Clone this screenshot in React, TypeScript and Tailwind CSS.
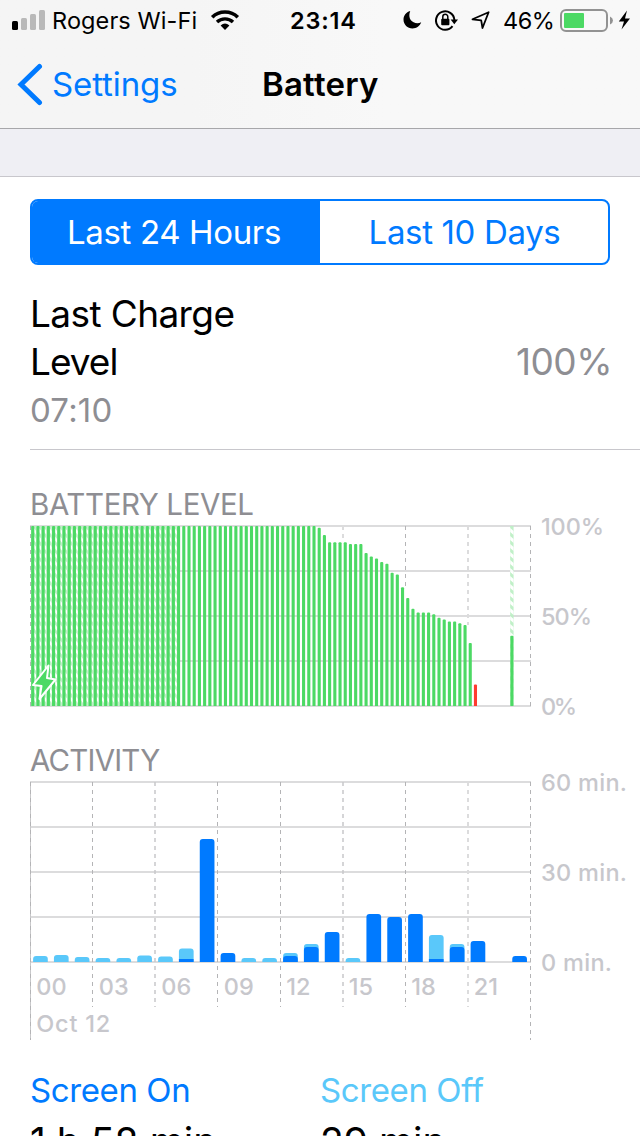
import type { ReactNode } from "react";

const BATTERY_TAIL = [
  99, 95, 91, 91, 91, 91, 90, 90, 90, 85, 83, 82, 80, 79, 74, 73, 66, 60, 54,
  52, 52, 52, 51, 49, 48, 47, 47, 46, 45, 35, 12,
];
const BATTERY: number[] = [...Array(55).fill(100), ...BATTERY_TAIL, 0, 0, 0, 0, 0, 0, 39];
const SLOT = 500 / 96;

// [total, screen on] in chart pixels, three per minute
const ACTIVITY: [number, number][] = [
  [6, 0], [7, 0], [5, 0], [4, 0], [4, 0], [6.5, 0], [5.5, 0], [13.5, 3],
  [123, 123], [9, 9], [4, 0], [4, 0], [9, 6], [18, 15], [30, 30], [4, 0],
  [48, 48], [45, 45], [48, 48], [27, 3], [18, 15], [21, 21], [0, 0], [6, 6],
];
const HOURS = ["00", "03", "06", "09", "12", "15", "18", "21"];

function Label({ x, y, w, children }: { x: number; y: number; w?: number; children: ReactNode }) {
  return (
    <text x={x} y={y} textLength={w} fontSize="23.5" fontWeight="500" fill="#c7c7cc">
      {children}
    </text>
  );
}

function topRounded(x: number, h: number, w: number, r: number, base: number) {
  const q = Math.min(r, h);
  return `M${x} ${base}V${base - h + q}q0 ${-q} ${q} ${-q}h${w - 2 * q}q${q} 0 ${q} ${q}V${base}Z`;
}

function Grid() {
  return (
    <g fill="#dcdcdd">
      {[0, 45, 90, 135, 180].map((y) => (
        <rect key={y} x="30" y={y + 5} width="501" height="2" />
      ))}
    </g>
  );
}

function ChargingStripe({ slot }: { slot: number }) {
  const x = 31 + slot * SLOT;
  const w = slot === 92 ? 3.4 : SLOT;
  const left = slot === 92 ? x : x + 2.8;
  const right = x + w;
  return (
    <g opacity="0.94">
      <rect x={x} y={6} width={w} height={180} fill="#bdf0c5" />
      {[...Array(22)].map((_, k) => {
        const y = 8 + k * 8;
        return (
          <path key={k} d={`M${left} ${y}L${right} ${y + 3}V${y + 7}L${left} ${y + 4}Z`} fill="#fff" />
        );
      })}
    </g>
  );
}

function BatteryChart() {
  return (
    <svg width="640" height="206" className="block shrink-0 overflow-visible">
      <Grid />
      <g stroke="#b4b4b6" strokeDasharray="4 4">
        <path d="M343 6V20" strokeWidth="2" stroke="#dcdcdd" />
        <path d="M405.5 6V67" />
        <path d="M468 6V105" stroke="#dcdcdd" strokeWidth="2" />
        <path d="M530.5 6V186" />
        <path d="M30.5 6V186" />
      </g>
      {BATTERY.map((_, i) => (i < 28 || i === 92 ? <ChargingStripe key={i} slot={i} /> : null))}
      {BATTERY.map((level, i) =>
        level > 0 ? (
          <path
            key={i}
            d={topRounded(31.2 + i * SLOT, level * 1.8, 3.1, 1, 186)}
            fill={level < 20 ? "#ff3b30" : "#4cd964"}
          />
        ) : null,
      )}
      <path
        d="M48.5 145.5L33 165L41.5 166L39.5 179L55.5 159.5L47 158Z"
        fill="#4cd964"
        stroke="#fff"
        strokeWidth="2"
        strokeLinejoin="round"
      />
      <Label x={541} y={15} w={63}>100%</Label>
      <Label x={541} y={105} w={51}>50%</Label>
      <Label x={541} y={195} w={36}>0%</Label>
    </svg>
  );
}

function ActivityChart() {
  return (
    <svg width="640" height="270" className="block shrink-0 overflow-visible">
      <Grid />
      <g stroke="#b4b4b6" strokeDasharray="4 4">
        <path d="M30.5 6V264" stroke="#c8c8ca" strokeDasharray="none" />
        <path d="M30.5 6V264" />
        <path d="M92.5 6V231" />
        <path d="M155 6V231" strokeWidth="1.5" stroke="#c8c8ca" />
        <path d="M217.5 6V231" />
        <path d="M280.5 6V231" />
        <path d="M343 6V231" strokeWidth="1.5" stroke="#c8c8ca" />
        <path d="M405.5 6V231" />
        <path d="M468 6V231" strokeWidth="2" stroke="#dcdcdd" />
        <path d="M530.5 6V264" />
      </g>
      {ACTIVITY.map(([total, on], i) => {
        const x = 33.1 + (i * 500) / 24;
        return (
          <g key={i}>
            {total > on && <path d={topRounded(x, total, 14.7, 3, 186)} fill="#5ac8fa" />}
            {on > 0 && <path d={topRounded(x, on, 14.7, on > 3 ? 3 : 0.5, 186)} fill="#007aff" />}
          </g>
        );
      })}
      {HOURS.map((h, i) => (
        <Label key={h} x={36.3 + i * 62.5} y={219}>{h}</Label>
      ))}
      <Label x={36.3} y={256} w={74}>Oct 12</Label>
      <Label x={541} y={15} w={86}>60 min.</Label>
      <Label x={541} y={105} w={86}>30 min.</Label>
      <Label x={541} y={195} w={71}>0 min.</Label>
    </svg>
  );
}

function StatusBar() {
  return (
    <div className="flex h-10 shrink-0 items-center">
      <svg width="34" height="22" className="ml-3 shrink-0">
        <rect x="0" y="12" width="6" height="9" rx="1.5" />
        <g fill="#b9b9b9">
          <rect x="9" y="9" width="6" height="12" rx="1.5" />
          <rect x="18" y="5" width="6" height="16" rx="1.5" />
          <rect x="27" y="1" width="6" height="20" rx="1.5" />
        </g>
      </svg>
      <span className="ml-1.5 w-[158px] pt-[2px] text-[23.5px] tracking-[0.1px]">Rogers Wi-Fi</span>
      <svg width="30" height="22" className="shrink-0" fill="none" stroke="#000">
        <path d="M2.2 8.2C9.2 1.3 20.8 1.3 27.8 8.2" strokeWidth="3.6" />
        <path d="M7 13C11.4 8.8 18.6 8.8 23 13" strokeWidth="3.4" />
        <path d="M10.6 16.4Q15 12.8 19.4 16.4L15 21Z" fill="#000" stroke="none" />
      </svg>
      <span className="ml-[50px] w-[113px] pt-[2px] text-[23.5px] font-semibold tracking-[0.8px]">23:14</span>
      <svg width="19" height="20" className="shrink-0">
        <path d="M7.2 1C3 2.3 0.5 5.5 0.5 9.6C0.5 14.8 4.5 18.5 9.5 18.5C13.6 18.5 17 16 18.2 12.3C12 15.2 3.6 10.5 7.2 1Z" />
      </svg>
      <svg width="24" height="22" className="ml-[13px] shrink-0">
        <path d="M17.5 17.2A9.2 9.2 0 1 1 19.4 11" fill="none" stroke="#000" strokeWidth="2" />
        <path d="M15.6 10.6H23L19.3 15.2Z" />
        <rect x="6.2" y="9.8" width="8.2" height="6.4" rx="0.9" />
        <path d="M7.8 10V7.7a2.5 2.5 0 0 1 5 0V10" fill="none" stroke="#000" strokeWidth="1.5" />
      </svg>
      <svg width="20" height="20" className="ml-[11.5px] shrink-0">
        <path d="M1.5 9.3L17.6 2.2L11.5 18L10.2 10.3Z" fill="none" stroke="#000" strokeWidth="1.8" strokeLinejoin="round" />
      </svg>
      <span className="ml-[12.5px] w-[57px] pt-[2px] text-[23.5px] tracking-[-0.5px]">46%</span>
      <svg width="74" height="26" className="shrink-0">
        <rect x="1" y="3" width="46" height="21" rx="5" fill="none" stroke="#929292" strokeWidth="2" />
        <rect x="4" y="6" width="20" height="15" rx="1" fill="#4cd964" />
        <path d="M50 9.5Q53 11 53 13.5T50 17.5Z" fill="#929292" />
        <path d="M67 3.5L58.8 14.6H64L61.5 22.5L70 11.5H65Z" />
      </svg>
    </div>
  );
}

export default function App() {
  return (
    <div className="flex h-[1136px] w-[640px] flex-col overflow-hidden bg-white font-['Inter',sans-serif] whitespace-nowrap text-black">
      <header className="flex h-[129px] shrink-0 flex-col border-b border-[#a7a7aa] bg-linear-to-r from-[#f5f5f5] from-30% to-[#f8f8f8] to-60%">
        <StatusBar />
        <div className="grid h-[88px] grid-cols-[262px_1fr] items-center text-[33px]">
          <a className="flex items-center text-[#007aff]">
            <svg width="34" height="44" className="ml-3 shrink-0" fill="none" stroke="#007aff" strokeWidth="5" strokeLinecap="round" strokeLinejoin="miter">
              <path d="M27.5 4.5L9 22.5L27.5 40.5" />
            </svg>
            <span className="ml-1.5 pt-[2px] tracking-[-0.1px]">Settings</span>
          </a>
          <h1 className="pt-[2px] font-semibold tracking-[0.2px]">Battery</h1>
        </div>
      </header>
      <div className="h-12 shrink-0 border-b border-[#c8c7cc] bg-[#efeff4]" />
      <div className="mx-[30px] mt-[22px] grid h-[66px] shrink-0 grid-cols-2 overflow-hidden rounded-lg border-2 border-[#007aff] text-center text-[33px] leading-[62px] tracking-[-0.35px]">
        <div className="bg-[#007aff] pr-[4px] text-white">Last 24 Hours</div>
        <div className="pl-px text-[#007aff]">Last 10 Days</div>
      </div>
      <div className="ml-[30px] flex h-[185px] shrink-0 items-center justify-between border-b border-[#c8c7cc] pr-[28px] text-[37px] leading-[48px]">
        <div className="pt-[9px]">
          <div className="tracking-[-0.6px]">Last Charge</div>
          <div className="tracking-[-1px]">Level</div>
          <div className="text-[33px] tracking-[0.2px] text-[#8e8e93]">07:10</div>
        </div>
        <div className="pt-[9px] tracking-[-0.5px] text-[#8e8e93]">100%</div>
      </div>
      <h2 className="mt-[34px] ml-[30px] h-9 shrink-0 text-[29.5px] leading-[40px] tracking-[-0.4px] text-[#8e8e93]">BATTERY LEVEL</h2>
      <BatteryChart />
      <h2 className="mt-[14px] ml-[30px] h-9 shrink-0 text-[29.5px] leading-[40px] tracking-[-0.8px] text-[#8e8e93]">ACTIVITY</h2>
      <ActivityChart />
      <div className="mt-5 ml-[30px] grid shrink-0 grid-cols-[290px_1fr] text-[33px] leading-[48px] tracking-[-0.4px]">
        <div className="text-[#007aff]">Screen On</div>
        <div className="text-[#5ac8fa]">Screen Off</div>
        <div className="pt-1 text-[39px] tracking-[0px]">1 h 58 min</div>
        <div className="pt-1 text-[39px] tracking-[0px]">29 min</div>
      </div>
    </div>
  );
}
